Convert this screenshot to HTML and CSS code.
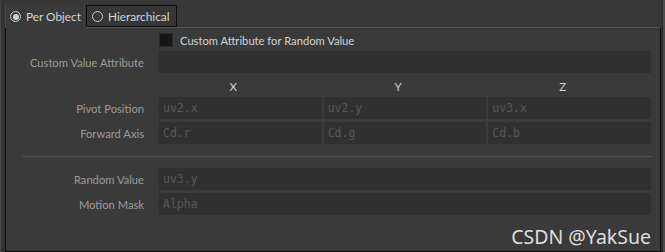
FILE: index.html
```html
<!DOCTYPE html>
<html>
<head>
<meta charset="utf-8">
<link rel="stylesheet" href="styles.css">
</head>
<body>
<div class="frame">
  <div class="edge-left"></div>
  <div class="main">
    <div class="tabs">
      <div class="tab active"><span class="radio on"></span>Per Object</div>
      <div class="tab"><span class="radio"></span>Hierarchical</div>
    </div>
    <div class="panel">
      <div class="row check-row">
        <div class="label"></div>
        <div class="check-wrap"><span class="checkbox"></span><span class="check-label">Custom Attribute for Random Value</span></div>
      </div>
      <div class="row">
        <div class="label">Custom Value Attribute</div>
        <div class="field"></div>
      </div>
      <div class="row head-row">
        <div class="label"></div>
        <div class="triple">
          <div class="axis">X</div><div class="axis">Y</div><div class="axis">Z</div>
        </div>
      </div>
      <div class="row">
        <div class="label">Pivot Position</div>
        <div class="triple">
          <div class="field">uv2.x</div><div class="field">uv2.y</div><div class="field">uv3.x</div>
        </div>
      </div>
      <div class="row">
        <div class="label">Forward Axis</div>
        <div class="triple">
          <div class="field">Cd.r</div><div class="field">Cd.g</div><div class="field">Cd.b</div>
        </div>
      </div>
      <div class="sep"></div>
      <div class="row">
        <div class="label">Random Value</div>
        <div class="field">uv3.y</div>
      </div>
      <div class="row">
        <div class="label">Motion Mask</div>
        <div class="field">Alpha</div>
      </div>
      <div class="watermark">CSDN @YakSue</div>
    </div>
  </div>
  <div class="edge-right"></div>
</div>
</body>
</html>
```
FILE: styles.css
```css
html, body {
  margin: 0;
  padding: 0;
}
body {
  background: #383838;
  width: 665px;
  height: 252px;
  overflow: hidden;
  font-family: "Lato", "Noto Sans", sans-serif;
}
.frame {
  display: flex;
  height: 252px;
}
.edge-left {
  width: 5px;
  flex-shrink: 0;
  background: linear-gradient(to right, #474747 0, #474747 1px, #333333 1px);
}
.main {
  width: 656px;
  flex-shrink: 0;
  display: flex;
  flex-direction: column;
}
.edge-right {
  width: 4px;
  flex-shrink: 0;
  background: linear-gradient(to right, #2e2e2e 0, #2e2e2e 2px, #4a4a4a 2px);
}
.tabs {
  display: flex;
  padding-top: 5px;
  height: 22px;
  box-sizing: content-box;
}
.tab {
  display: flex;
  align-items: center;
  flex-shrink: 0;
  white-space: nowrap;
  box-sizing: border-box;
  font-size: 11.8px;
  color: #d6d6d6;
}
.tab.active {
  width: 81px;
  padding-left: 4px;
  background: #3a3a3a;
  border-left: 1px solid #4a4a4a;
  height: 23px;
  margin-bottom: -1px;
  position: relative;
  z-index: 1;
}
.tab:not(.active) {
  width: 91px;
  padding-left: 5px;
  border: 1px solid #0c0c0c;
  height: 22px;
  background: #363636;
}
.radio {
  flex-shrink: 0;
  width: 9px;
  height: 9px;
  border-radius: 50%;
  border: 1.5px solid #cfcfcf;
  margin-right: 5px;
  box-sizing: content-box;
  position: relative;
}
.radio.on::after {
  content: "";
  position: absolute;
  left: 1.5px;
  top: 1.5px;
  width: 6px;
  height: 6px;
  border-radius: 50%;
  background: #d0d0d0;
}
.panel {
  position: relative;
  flex: 1;
  max-height: 219px;
  background: #3a3a3a;
  border: 1px solid #0c0c0c;
  border-top-color: #555555;
  padding: 5px 8px 0 0;
}
.row {
  display: grid;
  grid-template-columns: 138px 492px;
  column-gap: 15px;
  align-items: center;
  margin-bottom: 3px;
}
.label {
  text-align: right;
  font-size: 11.2px;
  color: #9c9c9c;
  white-space: nowrap;
}
.check-row {
  height: 14px;
  margin-bottom: 4px;
}
.check-wrap {
  display: flex;
  align-items: center;
}
.checkbox {
  width: 12px;
  height: 12px;
  background: #161616;
  border: 1px solid #2c2c2c;
  margin-right: 7px;
}
.check-label {
  font-size: 11.2px;
  color: #d2d2d2;
}
.field {
  height: 22px;
  background: #303030;
  font-family: "DejaVu Sans Mono", monospace;
  font-size: 11.5px;
  color: #585858;
  line-height: 22px;
  padding-left: 4px;
  box-sizing: border-box;
}
.triple {
  display: grid;
  grid-template-columns: 1fr 1fr 1fr;
  column-gap: 2px;
}
.head-row {
  height: 21px;
  margin-bottom: 0;
}
.axis {
  text-align: center;
  font-size: 11.5px;
  color: #d2d2d2;
  padding-right: 14px;
}
.sep {
  height: 1px;
  background: #505050;
  margin: 12px 0 11px 16px;
}
.watermark {
  position: absolute;
  right: 9px;
  bottom: 1px;
  font-family: "Noto Sans", sans-serif;
  font-size: 19.5px;
  color: #dedede;
}
```
